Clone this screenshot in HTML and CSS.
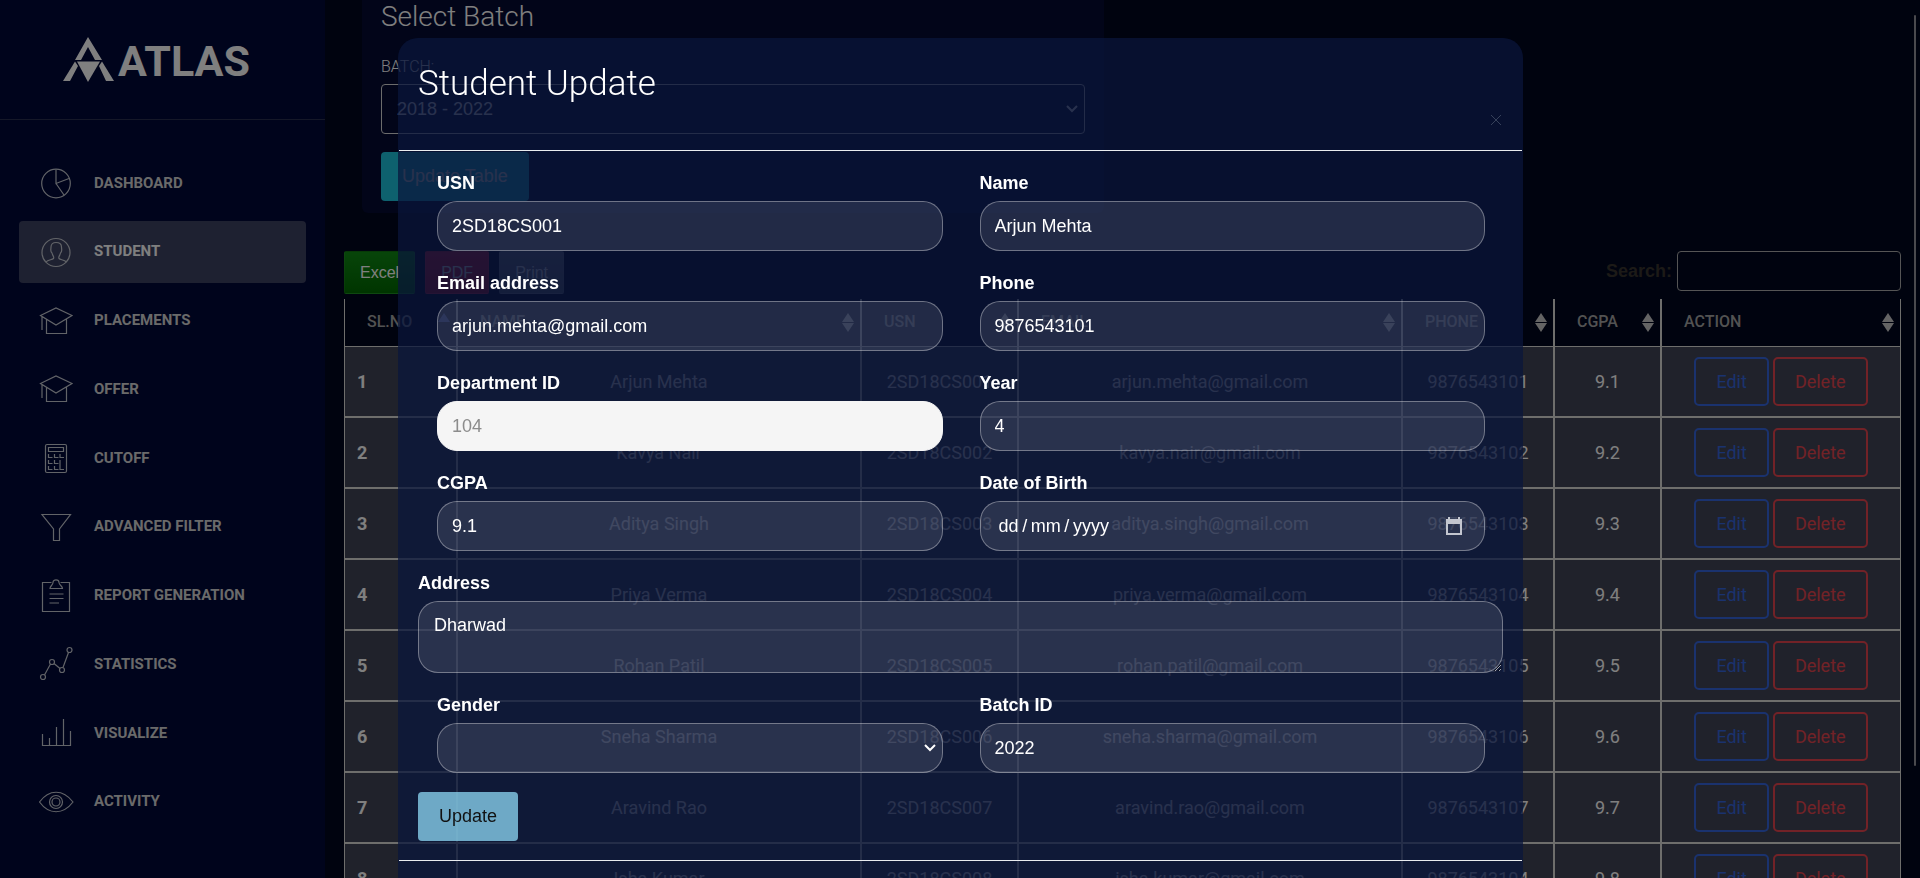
FILE: index.html
```html
<!DOCTYPE html>
<html lang="en">
<head>
<meta charset="utf-8">
<title>Atlas - Student</title>
<link rel="stylesheet" href="styles.css">
</head>
<body>
<div class="app">
  <aside class="sidebar">
    <a class="logo" href="#" aria-label="Atlas">
      <svg class="logo-mark" viewBox="0 0 51 45" aria-hidden="true"><path d="M25 0L39 23H32L25 10L18 23H12Z"/><path d="M14 24.500H37L25 45Z"/><path d="M12 24.500L15 29L7 44H0Z"/><path d="M39 24.500L51 44H43L36 29Z"/></svg>
      <span class="logo-text">ATLAS</span>
    </a>
    <nav class="nav">
      <a class="nav-item" href="#"><svg class="nav-icon" viewBox="0 0 36 36"><circle cx="18" cy="18.500" r="14.300"/><path d="M18 4.500V18.500L31 13.500M18 18.500L26 30"/></svg>Dashboard</a>
      <a class="nav-item active" href="#"><svg class="nav-icon" viewBox="0 0 36 36"><circle cx="18" cy="18.500" r="14"/><path d="M8 28C10 25.500 14 26 15.500 24.500C16.500 23 14.500 21.500 14 19C12 17.500 13 15.500 13 13C13 10 15 8.500 18 8.500S23.500 10 23.500 13C23.500 15.500 24.500 17.500 22.500 19C22 21.500 20 23 21 24.500C22.500 26 26 25.500 28.500 28"/></svg>Student</a>
      <a class="nav-item" href="#"><svg class="nav-icon" viewBox="0 0 36 36"><path d="M2.500 12.500L18 5L34 12.500L18 22ZM8.500 16V30.500H28.500V16M4 13.500V27"/></svg>Placements</a>
      <a class="nav-item" href="#"><svg class="nav-icon" viewBox="0 0 36 36"><path d="M2.500 12.500L18 5L34 12.500L18 22ZM8.500 16V30.500H28.500V16M4 13.500V27"/></svg>Offer</a>
      <a class="nav-item" href="#"><svg class="nav-icon" viewBox="0 0 36 36"><rect x="7.500" y="4.500" width="21" height="28" rx="1.500"/><path d="M10.500 7.500H25.500V11.500H10.500ZM10.500 14V17.500H14.500M16.500 14V17.500H20.500M22 14V17.500H26M10.500 20V23.500H14.500M16.500 20V23.500H20.500M22 20V29.500H26M10.500 26V29.500H14.500M16.500 26V29.500H20.500"/></svg>Cutoff</a>
      <a class="nav-item" href="#"><svg class="nav-icon" viewBox="0 0 36 36"><path d="M4 5.500H32.500L21.500 20V31.500H15.500V20Z"/></svg>Advanced Filter</a>
      <a class="nav-item" href="#"><svg class="nav-icon" viewBox="0 0 36 36"><path d="M13.500 4.500H4.500V33.500H31.500V4.500H22.500M12 10.500C12 8 15 7 15 4.500C15 1 21 1 21 4.500C21 7 24.500 8 24.500 10.500ZM11.500 16H25.500M11.500 20.500H25.500M11.500 25H21"/></svg>Report Generation</a>
      <a class="nav-item" href="#"><svg class="nav-icon" viewBox="0 0 36 36"><circle cx="5" cy="31" r="2.500"/><circle cx="14" cy="16" r="2.500"/><circle cx="24" cy="24" r="2.500"/><circle cx="31.500" cy="4" r="2.500"/><path d="M6.500 29L12.500 18M16 17.500L22 22.500M25 21.500L30.500 6.500"/></svg>Statistics</a>
      <a class="nav-item" href="#"><svg class="nav-icon" viewBox="0 0 36 36"><path d="M4.500 19V30.500H32.500V16M11.500 23V30.500M18.500 12V30.500M25.500 4V30.500"/></svg>Visualize</a>
      <a class="nav-item" href="#"><svg class="nav-icon" viewBox="0 0 36 36"><path d="M1.500 18C11 5 25 5 35 18C25 31 11 31 1.500 18Z"/><circle cx="18" cy="18" r="6.500"/><circle cx="18" cy="18" r="4"/></svg>Activity</a>
    </nav>
  </aside>

  <main class="main">
    <section class="card">
      <h2 class="card-title">Select Batch</h2>
      <label class="card-label" for="batch">BATCH:</label>
      <select class="batch-select" id="batch"><option>2018 - 2022</option></select>
      <button class="btn-table" type="button">Update Table</button>
    </section>

    <div class="toolbar">
      <div class="exports">
        <button class="export excel" type="button">Excel</button>
        <button class="export pdf" type="button">PDF</button>
        <button class="export print" type="button">Print</button>
      </div>
      <div class="search">
        <label for="search">Search:</label>
        <input id="search" type="search">
      </div>
    </div>

    <table class="students">
      <colgroup><col class="c-no"><col class="c-name"><col class="c-usn"><col class="c-mail"><col class="c-phone"><col class="c-cgpa"><col class="c-act"></colgroup>
      <thead>
        <tr><th class="asc">SL.NO</th><th>NAME</th><th>USN</th><th>EMAIL</th><th>PHONE</th><th>CGPA</th><th>ACTION</th></tr>
      </thead>
      <tbody>
        <tr><td>1</td><td>Arjun Mehta</td><td>2SD18CS001</td><td>arjun.mehta@gmail.com</td><td>9876543101</td><td>9.1</td><td><button class="act edit" type="button">Edit</button><button class="act delete" type="button">Delete</button></td></tr>
        <tr><td>2</td><td>Kavya Nair</td><td>2SD18CS002</td><td>kavya.nair@gmail.com</td><td>9876543102</td><td>9.2</td><td><button class="act edit" type="button">Edit</button><button class="act delete" type="button">Delete</button></td></tr>
        <tr><td>3</td><td>Aditya Singh</td><td>2SD18CS003</td><td>aditya.singh@gmail.com</td><td>9876543103</td><td>9.3</td><td><button class="act edit" type="button">Edit</button><button class="act delete" type="button">Delete</button></td></tr>
        <tr><td>4</td><td>Priya Verma</td><td>2SD18CS004</td><td>priya.verma@gmail.com</td><td>9876543104</td><td>9.4</td><td><button class="act edit" type="button">Edit</button><button class="act delete" type="button">Delete</button></td></tr>
        <tr><td>5</td><td>Rohan Patil</td><td>2SD18CS005</td><td>rohan.patil@gmail.com</td><td>9876543105</td><td>9.5</td><td><button class="act edit" type="button">Edit</button><button class="act delete" type="button">Delete</button></td></tr>
        <tr><td>6</td><td>Sneha Sharma</td><td>2SD18CS006</td><td>sneha.sharma@gmail.com</td><td>9876543106</td><td>9.6</td><td><button class="act edit" type="button">Edit</button><button class="act delete" type="button">Delete</button></td></tr>
        <tr><td>7</td><td>Aravind Rao</td><td>2SD18CS007</td><td>aravind.rao@gmail.com</td><td>9876543107</td><td>9.7</td><td><button class="act edit" type="button">Edit</button><button class="act delete" type="button">Delete</button></td></tr>
        <tr><td>8</td><td>Isha Kumar</td><td>2SD18CS008</td><td>isha.kumar@gmail.com</td><td>9876543104</td><td>9.8</td><td><button class="act edit" type="button">Edit</button><button class="act delete" type="button">Delete</button></td></tr>
      </tbody>
    </table>
  </main>
</div>

<div class="scroll-thumb"></div>
<div class="backdrop"></div>

<div class="modal" role="dialog" aria-labelledby="modal-title">
  <form class="dialog">
    <header class="dialog-head">
      <h1 class="dialog-title" id="modal-title">Student Update</h1>
      <button class="close" type="button" aria-label="Close"><svg viewBox="0 0 12 12" aria-hidden="true"><path d="M1 1L11 11M11 1L1 11"/></svg></button>
    </header>
    <div class="dialog-body">
      <div class="fields">
        <div class="field"><label for="usn">USN</label><input class="control" id="usn" type="text" value="2SD18CS001"></div>
        <div class="field"><label for="name">Name</label><input class="control" id="name" type="text" value="Arjun Mehta"></div>
        <div class="field"><label for="email">Email address</label><input class="control" id="email" type="email" value="arjun.mehta@gmail.com"></div>
        <div class="field"><label for="phone">Phone</label><input class="control" id="phone" type="tel" value="9876543101"></div>
        <div class="field"><label for="dept">Department ID</label><input class="control" id="dept" type="text" value="104" disabled></div>
        <div class="field"><label for="year">Year</label><input class="control" id="year" type="text" value="4"></div>
        <div class="field"><label for="cgpa">CGPA</label><input class="control" id="cgpa" type="text" value="9.1"></div>
        <div class="field"><label for="dob">Date of Birth</label>
          <div class="control date"><input id="dob" type="text" placeholder="dd&#8201;/&#8201;mm&#8201;/&#8201;yyyy"><svg viewBox="0 0 18 18" aria-hidden="true"><path d="M1 2H3V0H5V2H13V0H15V2H17V18H1ZM3 7V16H15V7Z" fill-rule="evenodd"/></svg></div>
        </div>
      </div>
      <div class="field field-wide"><label for="address">Address</label><textarea class="control" id="address" rows="2">Dharwad</textarea></div>
      <div class="fields">
        <div class="field"><label for="gender">Gender</label><select class="control" id="gender"><option></option></select></div>
        <div class="field"><label for="batchid">Batch ID</label><input class="control" id="batchid" type="text" value="2022"></div>
      </div>
      <button class="btn-update" type="submit">Update</button>
    </div>
    <footer class="dialog-foot"></footer>
  </form>
</div>
</body>
</html>
```
FILE: styles.css
```css
*,
*::before,
*::after {
  box-sizing: border-box;
}

body {
  margin: 0;
  height: 100vh;
  overflow: hidden;
  background: #00061e;
  color: #fff;
  font: 18px/27px "Liberation Sans", Arial, sans-serif;
}

button,
input,
select,
textarea {
  font: inherit;
  color: inherit;
}

.app {
  display: flex;
  height: 100vh;
}

/* Sidebar */
.sidebar {
  flex: 0 0 325px;
  background: #000838;
  font-family: Roboto, sans-serif;
}

.logo {
  display: flex;
  align-items: center;
  gap: 4px;
  height: 120px;
  padding-left: 63px;
  border-bottom: 1px solid #2b3150;
  color: #fff;
  text-decoration: none;
}

.logo-mark {
  width: 51px;
  height: 45px;
  fill: #fff;
}

.logo-text {
  padding-top: 3px;
  font-size: 43px;
  line-height: 48px;
  font-weight: 700;
}

.nav {
  display: flex;
  flex-direction: column;
  justify-content: space-between;
  height: 713px;
  padding: 32px 19px 0;
}

.nav-item {
  display: flex;
  align-items: center;
  gap: 20px;
  height: 62px;
  padding-left: 19px;
  border-radius: 4px;
  color: #d4d4d4;
  font-size: 15px;
  font-weight: 700;
  text-decoration: none;
  text-transform: uppercase;
}

.nav-item.active {
  background: #3d4262;
  color: #fff;
}

.nav-icon {
  width: 36px;
  height: 36px;
  fill: none;
  stroke: #c4c8d0;
  stroke-width: 1.2;
}

/* Main content */
.main {
  flex: 1;
  min-width: 0;
  padding: 0 19px;
}

.card {
  width: calc(50% - 37px);
  margin: 0 18px;
  padding: 1px 19px 12px;
  border-radius: 0 0 6px 6px;
  background: #040a32;
}

.card-title {
  margin: 0;
  font: 300 28px/32px Roboto, sans-serif;
}

.card-label {
  display: block;
  margin-top: 22px;
  font: 300 16px/24px Roboto, sans-serif;
}

.batch-select {
  display: block;
  width: 100%;
  height: 50px;
  margin: 5px 0 18px;
  padding: 0 15px;
  border: 1px solid #d9d9d9;
  border-radius: 4px;
}

.batch-select,
select.control {
  appearance: none;
  background-image: url("data:image/svg+xml,%3Csvg xmlns='http://www.w3.org/2000/svg' width='12' height='8'%3E%3Cpath d='M1 1l5 5 5-5' fill='none' stroke='white' stroke-width='2'/%3E%3C/svg%3E");
  background-repeat: no-repeat;
  background-position: right 6px center;
}

.batch-select {
  background-color: transparent;
}

.btn-table {
  display: block;
  height: 49px;
  padding: 0 21px;
  border: 0;
  border-radius: 4px;
  background: #1cc2dc;
}

.toolbar {
  display: flex;
  justify-content: space-between;
  margin: 38px 0 5px;
}

.exports {
  display: flex;
  gap: 10px;
}

.export {
  height: 43px;
  padding: 0 15px;
  border: 1px solid rgba(255, 255, 255, 0.06);
  border-radius: 2px;
  font-size: 16px;
}

.excel {
  background: linear-gradient(#0f8a14, #006a00);
}

.pdf {
  background: linear-gradient(#e81838, #c80a24);
}

.print {
  background: linear-gradient(#7c7f8a, #666a74);
}

.search {
  display: flex;
  align-items: center;
  gap: 5px;
  height: 40px;
  color: #38342e;
  font-weight: 700;
}

.search input {
  width: 224px;
  height: 40px;
  border: 1px solid #aaa;
  border-radius: 4px;
  background: transparent;
}

/* Student table */
.students {
  width: 100%;
  table-layout: fixed;
  border-spacing: 0;
  font-family: Roboto, sans-serif;
}

.c-no { width: 113px; }
.c-name { width: 404px; }
.c-usn { width: 157px; }
.c-mail { width: 384px; }
.c-phone { width: 152px; }
.c-cgpa { width: 107px; }
.c-act { width: 240px; }

.students th {
  position: relative;
  height: 47px;
  padding: 0 0 2px 22px;
  border: solid #dcdcd8;
  border-width: 0 1px;
  color: #a4a4a4;
  font-size: 16px;
  font-weight: 500;
  text-align: left;
}

.students th::before,
.students th::after {
  content: "";
  position: absolute;
  right: 6px;
  border: solid transparent;
  border-width: 0 6px;
}

.students th::before {
  top: 14px;
  border-bottom: 9px solid #c8c8c8;
}

.students th::after {
  top: 24px;
  border-top: 9px solid #c8c8c8;
}

.students th.asc::before {
  border-bottom-color: #5a64c8;
}

.students th.asc::after {
  border-top-color: transparent;
}

.students td {
  height: 71px;
  padding: 0;
  border: 1px solid #dcdcd8;
  background: #414456;
  text-align: center;
}

.students td:first-child {
  padding-left: 12px;
  font-weight: 700;
  text-align: left;
}

.act {
  height: 49px;
  padding: 0 20px;
  border: 2px solid;
  border-radius: 5px;
  background: transparent;
}

.edit {
  margin-right: 4px;
  border-color: #3464dc;
  color: #3464dc;
}

.delete {
  border-color: #e4444e;
  color: #e4444e;
}

/* Layers over the page */
.scroll-thumb {
  position: fixed;
  top: 15px;
  right: 4px;
  width: 2px;
  height: 751px;
  border-radius: 1px;
  background: #94949c;
}

.backdrop {
  position: fixed;
  inset: 0;
  background: rgba(0, 0, 0, 0.5);
}

.modal {
  position: fixed;
  inset: 0;
  overflow: hidden;
  padding: 38px 397px 0 398px;
}

.dialog {
  min-height: 100%;
  border: 1px solid transparent;
  border-radius: 20px;
  background: rgba(9, 21, 60, 0.74);
}

.dialog-head {
  display: flex;
  justify-content: space-between;
  height: 112px;
  padding: 20px 19px;
  border-bottom: 1px solid #e9ecef;
}

.dialog-title {
  margin: 0;
  font: 300 35px/50px Roboto, sans-serif;
}

.close {
  align-self: flex-end;
  display: flex;
  padding: 0;
  margin: 0 1px 4px 0;
  border: 0;
  background: none;
}

.close svg {
  width: 12px;
  height: 12px;
  stroke: #36415a;
  fill: none;
}

.dialog-body {
  padding: 19px;
}

.fields {
  display: grid;
  grid-template-columns: 1fr 1fr;
  gap: 19px 37px;
  padding: 0 18px 0 19px;
}

.field label {
  display: block;
  margin-bottom: 4px;
  font-weight: 700;
}

.field-wide {
  margin: 19px 0;
}

.control {
  display: block;
  width: 100%;
  height: 50px;
  padding: 0 14px;
  border: 1px solid rgba(255, 255, 255, 0.35);
  border-radius: 20px;
  background-color: rgba(255, 255, 255, 0.11);
  color: #fff;
  outline: none;
}

.control:disabled {
  border-color: #f5f5f5;
  background: #f5f5f5;
  color: #8c8c8c;
}

textarea.control {
  height: 72px;
  padding: 10px 15px;
}

.control.date {
  display: flex;
  align-items: center;
  padding: 0 21px 0 18px;
}

.date input {
  flex: 1;
  min-width: 0;
  padding: 0;
  border: 0;
  background: none;
  outline: none;
}

.date input::placeholder {
  color: #fff;
}

.date svg {
  width: 18px;
  height: 18px;
  fill: #c3c6cf;
}

.btn-update {
  display: block;
  height: 49px;
  margin-top: 19px;
  padding: 0 21px;
  border: 0;
  border-radius: 4px;
  background: rgba(135, 206, 235, 0.8);
  color: #111;
}

.dialog-foot {
  height: 60px;
  border-top: 1px solid #e9ecef;
}
```
